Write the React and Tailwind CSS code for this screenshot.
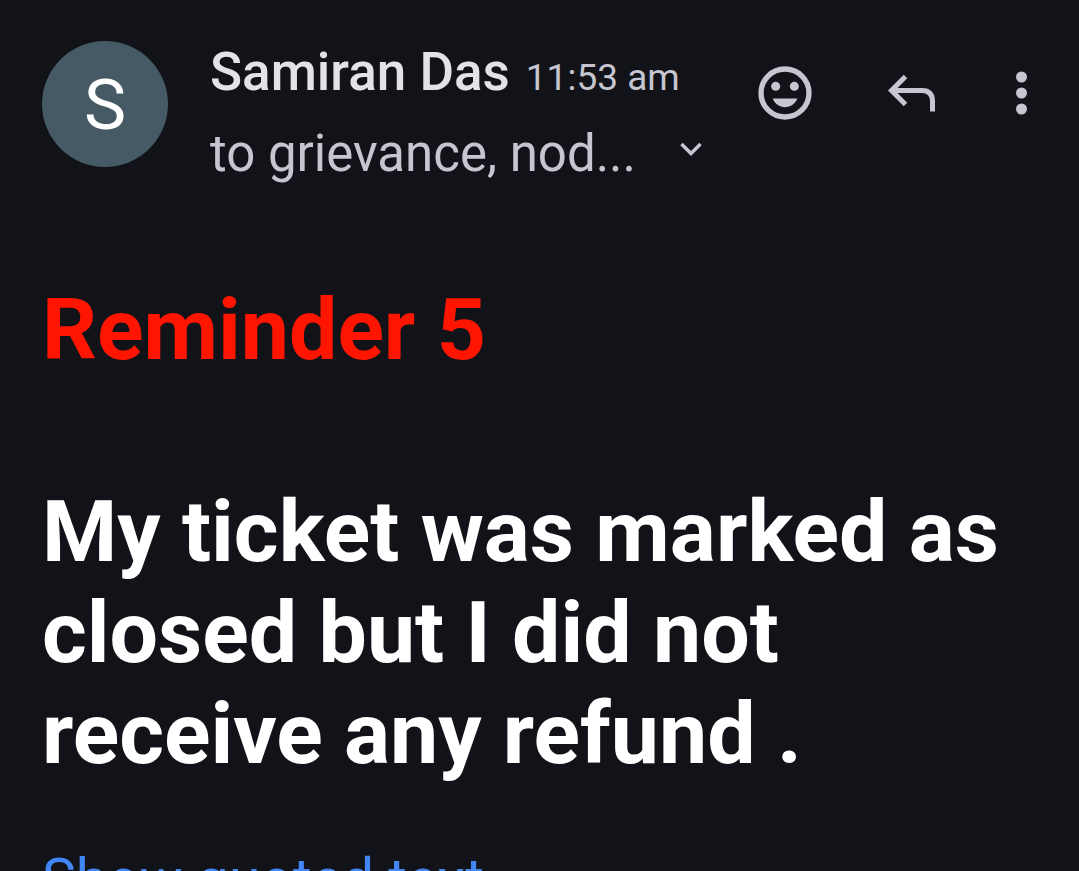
function SmileyIcon() {
  return (
    <svg viewBox="0 0 24 24" className="size-16" fill="currentColor" aria-hidden="true">
      <circle cx="12" cy="12" r="9" fill="none" stroke="currentColor" strokeWidth="2" />
      <circle cx="8.5" cy="9.5" r="1.7" />
      <circle cx="15.5" cy="9.5" r="1.7" />
      <path d="M7.400 14.100h9.200c-.7 2-2.500 3.200-4.600 3.200s-3.900-1.200-4.600-3.200z" />
    </svg>
  );
}

function ReplyIcon() {
  return (
    <svg viewBox="0 0 64 64" className="size-16" fill="none" stroke="currentColor" strokeWidth="5" aria-hidden="true">
      <path d="M34.500 15.500 20.500 29.500l14 14M20.500 29.500h30.500q10.500 0 10.500 11v10" />
    </svg>
  );
}

function MoreIcon() {
  return (
    <svg viewBox="0 0 64 64" className="size-16" fill="currentColor" aria-hidden="true">
      <circle cx="32.500" cy="16" r="5.500" />
      <circle cx="32.500" cy="32" r="5.500" />
      <circle cx="32.500" cy="48" r="5.500" />
    </svg>
  );
}

function ChevronIcon() {
  return (
    <svg viewBox="0 0 24 24" className="size-6" fill="none" stroke="currentColor" strokeWidth="3.500" aria-hidden="true">
      <path d="m1.500 2 9.500 9.500L20.500 2" />
    </svg>
  );
}

export default function App() {
  return (
    <main className="min-h-screen bg-[#121318] pt-10 pr-[26px] pl-[42px] font-['Roboto',sans-serif]">
      {/* HEADER */}
      <header className="flex items-start text-[#c6c6d0]">
        <div className="mt-px flex size-[126px] shrink-0 items-center justify-center rounded-full bg-[#455a64] pt-0.5 text-[71px] text-white">
          S
        </div>
        <div className="ml-[42px] min-w-0 flex-1 whitespace-nowrap">
          <div className="flex items-baseline gap-4 leading-[64px]">
            <h1 className="text-[53px] font-medium text-[#e3e2e9]">Samiran Das</h1>
            <time className="text-[37px]">11:53 am</time>
          </div>
          <button type="button" className="mt-3 flex items-center gap-11 text-[51px] leading-[64px]">
            <span>to grievance, nod...</span>
            <ChevronIcon />
          </button>
        </div>
        <div className="flex shrink-0 gap-[54px] pt-[21px]">
          <button type="button" aria-label="Add reaction"><SmileyIcon /></button>
          <button type="button" aria-label="Reply"><ReplyIcon /></button>
          <button type="button" aria-label="More options"><MoreIcon /></button>
        </div>
      </header>

      {/* MESSAGE */}
      <article className="mt-[93px] text-[86px] leading-[101px] font-bold text-white">
        <p className="text-[#ff1500]">Reminder 5</p>
        <p className="mt-[101px]">My ticket was marked as closed but I did not receive any refund .</p>
      </article>
      <a href="#quoted" className="mt-16 block text-[57px] leading-[64px] text-[#4285f4]">
        Show quoted text
      </a>
    </main>
  );
}
